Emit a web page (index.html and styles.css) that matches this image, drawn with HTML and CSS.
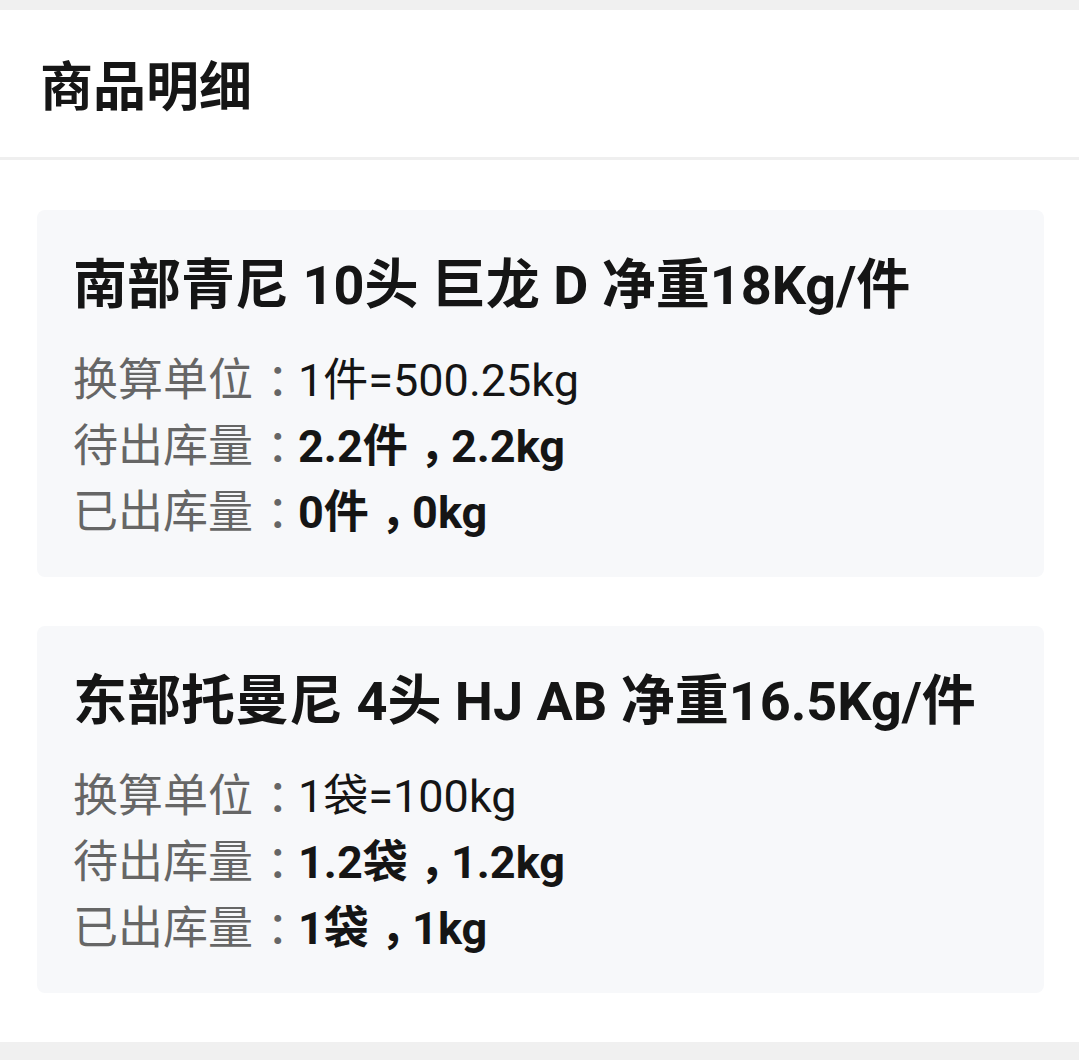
FILE: index.html
```html
<!DOCTYPE html>
<html lang="zh">
<head>
<meta charset="utf-8">
<link rel="stylesheet" href="styles.css">
</head>
<body>
<div class="page">
  <div class="header">商品明细</div>
  <div class="list">
    <div class="card">
      <div class="card-title">南部青尼 10头 巨龙 D 净重18Kg/件</div>
      <div class="row"><span class="label">换算单位<span class="punct">：</span></span><span class="val">1件=500.25kg</span></div>
      <div class="row"><span class="label">待出库量<span class="punct">：</span></span><span class="val bold">2.2件<span class="punct comma">，</span>2.2kg</span></div>
      <div class="row"><span class="label">已出库量<span class="punct">：</span></span><span class="val bold">0件<span class="punct comma">，</span>0kg</span></div>
    </div>
    <div class="card">
      <div class="card-title">东部托曼尼 4头 HJ AB 净重16.5Kg/件</div>
      <div class="row"><span class="label">换算单位<span class="punct">：</span></span><span class="val">1袋=100kg</span></div>
      <div class="row"><span class="label">待出库量<span class="punct">：</span></span><span class="val bold">1.2袋<span class="punct comma">，</span>1.2kg</span></div>
      <div class="row"><span class="label">已出库量<span class="punct">：</span></span><span class="val bold">1袋<span class="punct comma">，</span>1kg</span></div>
    </div>
  </div>
</div>
</body>
</html>
```

FILE: styles.css
```css
* { box-sizing: border-box; }
html, body {
  margin: 0;
  padding: 0;
  background: #f0f0f0;
  font-family: Roboto, "Noto Sans CJK SC", sans-serif;
}
.page {
  margin-top: 10px;
  background: #ffffff;
  padding-bottom: 49px;
}
.header {
  height: 150px;
  padding: 9px 0 0 40px;
  line-height: 139px;
  font-size: 53px;
  font-weight: 700;
  color: #161616;
  border-bottom: 3px solid #efefef;
}
.list {
  padding: 50px 35px 0 37px;
  display: flex;
  flex-direction: column;
  gap: 49px;
}
.card {
  background: #f7f8fa;
  border-radius: 8px;
  padding: 39px 36px 31px 36px;
}
.card-title {
  font-size: 54px;
  font-weight: 700;
  line-height: 74px;
  color: #151515;
  margin-bottom: 25px;
  white-space: nowrap;
}
.row {
  font-size: 45px;
  line-height: 66px;
  height: 66px;
  white-space: nowrap;
}
.punct {
  padding-left: 0.3em;
  letter-spacing: -0.3em;
}
.comma {
  padding-left: 0.26em;
  letter-spacing: -0.3em;
}
.label { color: #666666; }
.val { color: #151515; }
.bold { font-weight: 700; }
```
